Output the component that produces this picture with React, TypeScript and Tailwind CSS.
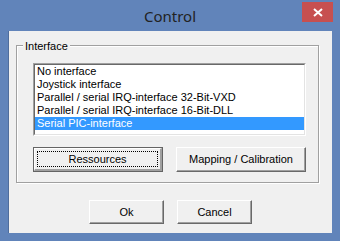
import React from "react";

const items = [
  "No interface",
  "Joystick interface",
  "Parallel / serial IRQ-interface 32-Bit-VXD",
  "Parallel / serial IRQ-interface 16-Bit-DLL",
  "Serial PIC-interface",
];

function Button({
  label,
  w,
  h,
  focused,
}: {
  label: string;
  w: string;
  h: string;
  focused?: boolean;
}) {
  if (focused) {
    return (
      <div className={`${w} ${h} border border-[#646464] bg-[#f0f0f0]`}>
        <div className="h-full w-full border-t border-l border-t-white border-l-white border-b-2 border-r-2 border-b-[#a0a0a0] border-r-[#a0a0a0] p-[2px]">
          <div className="flex h-full w-full items-center justify-center border border-dotted border-black">
            {label}
          </div>
        </div>
      </div>
    );
  }
  return (
    <div
      className={`${w} ${h} flex items-center justify-center border-t border-l border-t-white border-l-white border-b border-r border-b-[#696969] border-r-[#696969] bg-[#f0f0f0] shadow-[inset_-1px_-1px_0_#a0a0a0]`}
    >
      {label}
    </div>
  );
}

export default function App() {
  return (
    <div className="flex h-[241px] w-[340px] flex-col bg-[#6184ba] px-[8px] pb-[8px] font-['Liberation_Sans',Arial,sans-serif] text-[11px] leading-none text-black">
      {/* title bar */}
      <div className="relative flex h-[31px] items-center justify-center">
        <span className="pt-[1px] font-['Noto_Sans',sans-serif] text-[15px] text-[#222]">
          Control
        </span>
        <div className="absolute right-[-1px] top-[2px] flex h-[20px] w-[31px] items-center justify-center bg-[#c75050]">
          <svg width="10" height="9" viewBox="0 0 10 9">
            <path d="M1 1 L9 8 M9 1 L1 8" stroke="#fff" strokeWidth="2" />
          </svg>
        </div>
      </div>

      {/* client area */}
      <div className="flex flex-1 flex-col border-l border-[#4f6d9c] bg-[#f0f0f0] pl-[7px] pt-[14px]">
        <div className="relative h-[138px] w-[303px] border border-[#a0a0a0] pl-[16px] pt-[17px] shadow-[inset_1px_1px_0_#fff,1px_1px_0_#fff]">
          <span className="absolute left-[6px] top-[-5px] bg-[#f0f0f0] px-[2px]">
            Interface
          </span>
          <div className="h-[73px] w-[273px] border-t border-l border-t-[#a0a0a0] border-l-[#a0a0a0] border-b border-r border-b-white border-r-white">
            <div className="h-full w-full border-t border-l border-t-[#696969] border-l-[#696969] border-b border-r border-b-[#e3e3e3] border-r-[#e3e3e3] bg-white">
              {items.map((it, i) => (
                <div
                  key={it}
                  className={`flex h-[13px] items-center pl-[2px] ${
                    i === 4 ? "bg-[#3399ff] text-white" : ""
                  }`}
                >
                  {it}
                </div>
              ))}
            </div>
          </div>
          <div className="mt-[11px] flex gap-[13px]">
            <Button label="Ressources" w="w-[130px]" h="h-[25px]" focused />
            <Button label="Mapping / Calibration" w="w-[130px]" h="h-[25px]" />
          </div>
        </div>
        <div className="mt-[17px] flex gap-[13px] pl-[73px]">
          <Button label="Ok" w="w-[75px]" h="h-[24px]" />
          <Button label="Cancel" w="w-[75px]" h="h-[24px]" />
        </div>
      </div>
    </div>
  );
}
